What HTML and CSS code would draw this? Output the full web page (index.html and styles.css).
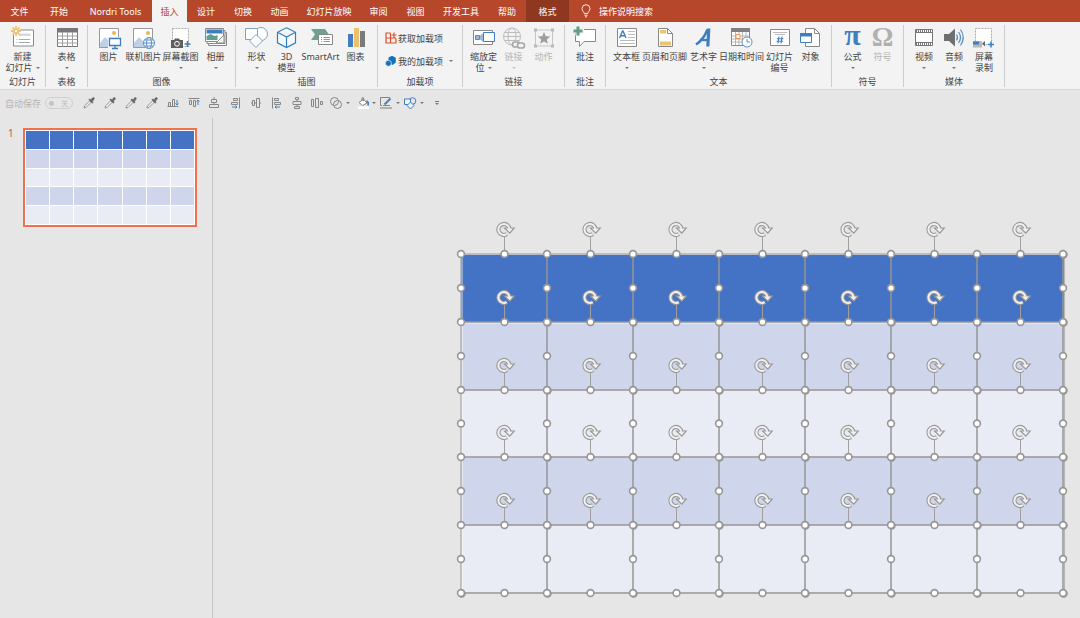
FILE: index.html
```html
<!DOCTYPE html>
<html lang="zh-CN">
<head>
<meta charset="utf-8">
<title>演示文稿</title>
<link rel="stylesheet" href="styles.css">
</head>
<body>
<div class="app">
<nav class="tabs">
  <button class="tab">文件</button>
  <button class="tab">开始</button>
  <button class="tab">Nordri Tools</button>
  <button class="tab active">插入</button>
  <button class="tab">设计</button>
  <button class="tab">切换</button>
  <button class="tab">动画</button>
  <button class="tab">幻灯片放映</button>
  <button class="tab">审阅</button>
  <button class="tab">视图</button>
  <button class="tab">开发工具</button>
  <button class="tab">帮助</button>
  <button class="tab context">格式</button>
  <button class="tab search"><svg width="10" height="14" viewBox="0 0 10 14" fill="none" stroke="#fbe9e4"><path d="M3.2 9.5C3.2 7.8 1 7 1 4.7a4 4 0 0 1 8 0C9 7 6.800 7.800 6.800 9.500zM3.300 11.200h3.400M4 12.800h2"/></svg><span>操作说明搜索</span></button>
</nav>

<section class="ribbon">
  <div class="group g-slide">
    <div class="tools">
      <button class="tool"><svg class="ico" viewBox="0 0 22 22"><path d="M1.500 3h20v16h-20z" fill="#fff" stroke="#8a8a8a"/><path d="M7 6.500h11.500v2.500H7z" fill="#d8d8d8"/><path d="M4.500 12.500h1M7 12.500h11M4.500 15.500h1M7 15.500h11" stroke="#aaa"/><circle cx="4" cy="4" r="4.500" fill="#f2f2f2"/><path d="M4-1v10M-1 4h10M.5.5l7 7M7.500.5l-7 7" stroke="#eab654" stroke-width="1.300"/><circle cx="4" cy="4" r="2" fill="#fff4dc" stroke="#eab654"/></svg><span>新建</span><span>幻灯片<i class="caret"></i></span></button>
    </div>
    <h2>幻灯片</h2>
  </div>
  <div class="group g-table">
    <div class="tools">
      <button class="tool w30"><svg class="ico" viewBox="0 0 22 22"><path d="M1.500 1.500h20v18h-20z" fill="#fff" stroke="#777"/><path d="M1 1h21v4.500H1z" fill="#777"/><path d="M1.500 9h20M1.500 12.500h20M1.500 16h20M6.500 5v14.500M11.500 5v14.500M16.500 5v14.500" stroke="#a0a0a0" fill="none"/></svg><span>表格</span><i class="caret"></i></button>
    </div>
    <h2>表格</h2>
  </div>
  <div class="group g-image">
    <div class="tools">
      <button class="tool w34"><svg class="ico" viewBox="0 0 22 22"><path d="M1.500 1.500h19v19h-19z" fill="#fff" stroke="#999"/><circle cx="16" cy="6" r="2" fill="#eab654"/><path d="M2 20v-4l5-6 5 5v5z" fill="#bdd0e6"/><path d="M10 10h13v12H10z" fill="#f2f2f2"/><path d="M11.500 11.500h11v7h-11zM17 18.500v2.500M14 21.500h6" fill="#fff" stroke="#3f7fc0" stroke-width="1.300"/></svg><span>图片</span></button>
      <button class="tool w36"><svg class="ico" viewBox="0 0 22 22"><path d="M.5 1.500h19v19H.5z" fill="#fff" stroke="#999"/><circle cx="15" cy="6" r="2" fill="#eab654"/><path d="M1 20v-4l5-6 5 5v5z" fill="#bdd0e6"/><g fill="#fff" stroke="#5b8fc6"><circle cx="16" cy="16" r="5.500"/><ellipse cx="16" cy="16" rx="2.500" ry="5.500"/><path d="M10.500 16h11M11.500 13h9M11.500 19h9"/></g></svg><span>联机图片</span></button>
      <button class="tool w38"><svg class="ico" viewBox="0 0 22 22"><path d="M2.500 1.500h16v18h-16z" fill="#fff" stroke="#aaa" stroke-dasharray="2 1"/><path d="M1 13h3l1-1.500h4l1 1.500h3v8H1z" fill="#5f5f5f"/><circle cx="7" cy="16.800" r="2.400" fill="none" stroke="#fff"/><path d="M14.500 17h6M17.500 14v6" stroke="#3f7fc0" stroke-width="1.600"/></svg><span>屏幕截图</span><i class="caret"></i></button>
      <button class="tool w32"><svg class="ico" viewBox="0 0 22 22"><g fill="#fff" stroke="#888"><path d="M3.500 5.500h18v13h-18z"/><path d="M2 3.500h18v13H2z"/><path d="M.5 1.500h18v13H.5z"/></g><path d="M1.500 2.500h16v4h-16z" fill="#3f7fc0"/><path d="M1.500 13V9l4-2 4 2 3-1v5z" fill="#5fa08c"/><path d="M19 8l-8 8h8z" fill="#f6f6f6" stroke="#888"/></svg><span>相册</span><i class="caret"></i></button>
    </div>
    <h2>图像</h2>
  </div>
  <div class="group g-illus">
    <div class="tools">
      <button class="tool w30"><svg class="ico" viewBox="0 0 22 22" fill="#fff" stroke="#7fa2c9"><circle cx="15" cy="7" r="6.500"/><path d="M-.5 1.500h12v11h-12z"/><path d="M10 7.500l6.500 6.500-6.500 6.500L3.500 14z"/></svg><span>形状</span><i class="caret"></i></button>
      <button class="tool w30"><svg class="ico" viewBox="0 0 22 22" fill="#f7fbff" stroke="#2f7ec4" stroke-width="1.200"><path d="M10.500 .8l9 4.500v10.500l-9 4.700-9-4.700V5.300zM1.500 5.300l9 4.700 9-4.700M10.500 10V20.500"/></svg><span>3D</span><span>模型</span></button>
      <button class="tool w38"><svg class="ico" viewBox="0 0 22 22"><path d="M1 2h14l4 5.500-4 5.500H1l4-5.500z" fill="#6aa490"/><path d="M8.500 7.500h14v10h-14z" fill="#fff" stroke="#888"/><path d="M11 10.500h1M13.500 10.500h6.500M11 12.500h1M13.500 12.500h6.500M11 14.500h1M13.500 14.500h6.500" stroke="#999"/></svg><span>SmartArt</span></button>
      <button class="tool w32"><svg class="ico" viewBox="0 0 22 22"><path d="M3 7h5v13H3z" fill="#3f7fc0"/><path d="M9 1h5v19H9z" fill="#edc06c"/><path d="M15 4h5v16h-5z" fill="#7a7a7a"/></svg><span>图表</span></button>
    </div>
    <h2>插图</h2>
  </div>
  <div class="group g-addin">
    <div class="rows">
      <button class="row"><svg width="12" height="12" viewBox="0 0 12 12" fill="none" stroke="#dc4f2c" stroke-width="1.200"><path d="M5.500 1H1v10h10V6.500M1 6h10M5.500 1v10M9 .5v5M6.600 3h4.900"/></svg><span>获取加载项</span></button>
      <button class="row"><svg width="12" height="12" viewBox="0 0 12 12"><path d="M3.500 2.500L7 .7l3.800 2v4.800L7.500 10 3.500 7.500z" fill="#1272bd"/><circle cx="3.400" cy="8.300" r="3" fill="#1272bd" stroke="#f2f2f2" stroke-width=".7"/></svg><span>我的加载项</span><i class="caret"></i></button>
    </div>
    <h2>加载项</h2>
  </div>
  <div class="group g-link">
    <div class="tools">
      <button class="tool w30"><svg class="ico" viewBox="0 0 22 22"><path d="M.5 3.500h19v14H.5z" fill="#fff" stroke="#888"/><path d="M2.500 8.500h4v4h-4z" fill="#9bb8d8" stroke="#5a8abf"/><path d="M7 8.500l4-3v10l-4-3z" fill="#9bb8d8"/><path d="M10.500 5.500h11v9h-11z" fill="#fff" stroke="#3f7fc0"/></svg><span>缩放定</span><span>位<i class="caret"></i></span></button>
      <button class="tool w30" disabled><svg class="ico" viewBox="0 0 22 22" fill="none" stroke="#bdbdbd"><g fill="#f7eff7"><circle cx="9" cy="9.500" r="8.500"/><ellipse cx="9" cy="9.500" rx="4" ry="8.500"/></g><path d="M.5 9.500h17M2 5.500h14M2 13.500h14"/><g stroke="#a8a8a8" stroke-width="1.700" fill="#f2f2f2"><rect x="9.500" y="15" width="7" height="5" rx="2.500"/><rect x="14.500" y="16" width="7" height="5" rx="2.500"/></g></svg><span>链接</span><i class="caret"></i></button>
      <button class="tool w30" disabled><svg class="ico" viewBox="0 0 22 22"><path d="M2.500 3h17v16h-17z" fill="none" stroke="#c6c6c6"/><path d="M1 1.500h3v3H1zM18 1.500h3v3h-3zM1 17.500h3v3H1zM18 17.500h3v3h-3z" fill="#b8b8b8"/><path d="M11 5l1.700 4.200 4.500.3-3.400 2.900 1.100 4.400-3.900-2.400-3.900 2.400 1.100-4.400-3.400-2.900 4.500-.3z" fill="#9d9d9d"/></svg><span>动作</span></button>
    </div>
    <h2>链接</h2>
  </div>
  <div class="group g-note">
    <div class="tools">
      <button class="tool w30"><svg class="ico" viewBox="0 0 22 22"><path d="M1.500 2.500h20v12H10l-4.500 5v-5h-4z" fill="#fff" stroke="#888"/><path d="M4-1v10M-1 4h11" stroke="#f2f2f2" stroke-width="5"/><path d="M4-.5v9M-.5 4h9" stroke="#5f9e88" stroke-width="3"/></svg><span>批注</span></button>
    </div>
    <h2>批注</h2>
  </div>
  <div class="group g-text">
    <div class="tools">
      <button class="tool w30"><svg class="ico" viewBox="0 0 22 22"><path d="M1.500 1.500h19v18h-19z" fill="#fff" stroke="#888"/><path d="M3.500 11L6.500 4h.5l3 7M4.800 8.800h4" fill="none" stroke="#3f7fc0" stroke-width="1.400"/><path d="M12 4.500h7M12 7.500h7M12 10.500h7M4 13.500h15M4 16.500h15" stroke="#bbb"/></svg><span>文本框</span><i class="caret"></i></button>
      <button class="tool w46"><svg class="ico" viewBox="0 0 22 22"><path d="M4.500 1.500h9l5 5v13h-14z" fill="#fff" stroke="#888"/><path d="M13.500 1.500v5h5" fill="none" stroke="#888"/><path d="M6 3h6v3.500H6zM6 14.500h11v4H6z" fill="#ecc275"/></svg><span>页眉和页脚</span></button>
      <button class="tool w32"><svg class="ico" viewBox="0 0 22 22" fill="none" stroke="#3f7fc0"><path d="M3 17.500C8.500 14 12 9 14.500 2.500" stroke-width="2.600"/><path d="M15.800 1.500l-1 18" stroke-width="3.200"/><path d="M7 12.500c3 1.500 5 0 8.500.5" stroke-width="2.200"/></svg><span>艺术字</span><i class="caret"></i></button>
      <button class="tool w44"><svg class="ico" viewBox="0 0 22 22"><path d="M.5 1.500h18v17H.5z" fill="#fff" stroke="#888"/><path d="M0 1h19v4H0z" fill="#808080"/><path d="M1 9h17M1 12h17M1 15h17M4.500 5v13M8 5v13M11.500 5v13M15 5v13" stroke="#b5b5b5"/><path d="M5 7.500h4v4H5z" fill="#fff" stroke="#e99357"/><circle cx="16" cy="15" r="5" fill="#fff" stroke="#6390c0"/><path d="M16 12v3h3" fill="none" stroke="#6390c0"/></svg><span>日期和时间</span></button>
      <button class="tool w32"><svg class="ico" viewBox="0 0 22 22" fill="none"><path d="M1.500 2.500h19v16h-19z" fill="#fff" stroke="#888"/><path d="M4 5.500h14M6 7.500h10" stroke="#bbb"/><path d="M10 9.500l-1 7M13 9.500l-1 7M8 11.700h6.500M7.500 14.300H14" stroke="#3f7fc0" stroke-width="1.100"/></svg><span>幻灯片</span><span>编号</span></button>
      <button class="tool w30"><svg class="ico" viewBox="0 0 22 22"><path d="M5.500 1.500h9l5 5v13h-14z" fill="#fff" stroke="#888"/><path d="M14.500 1.500v5h5" fill="none" stroke="#888"/><path d="M.5 6.500h11v9H.5z" fill="#fff" stroke="#3f7fc0"/><path d="M0 6h12v3.500H0z" fill="#3f7fc0"/></svg><span>对象</span></button>
    </div>
    <h2>文本</h2>
  </div>
  <div class="group g-symbol">
    <div class="tools">
      <button class="tool w30"><span class="glyph pi">π</span><span>公式</span><i class="caret"></i></button>
      <button class="tool w30" disabled><span class="glyph">Ω</span><span>符号</span></button>
    </div>
    <h2>符号</h2>
  </div>
  <div class="group g-media">
    <div class="tools">
      <button class="tool w30"><svg class="ico" viewBox="0 0 22 22"><path d="M2.500 2.500h17v16h-17z" fill="#fff" stroke="#777"/><path d="M3 4h16M3 17h16" stroke="#777" stroke-width="2" stroke-dasharray="1 1"/><path d="M3 5.500h16M3 15.500h16" stroke="#777"/></svg><span>视频</span><i class="caret"></i></button>
      <button class="tool w30"><svg class="ico" viewBox="0 0 22 22" fill="none"><path d="M1 7h5l6-5.500v18L6 14H1z" fill="#6f6f6f"/><path d="M13.500 7.500q2 3 0 6M15.500 5q4 5.500 0 11M17.500 2.500q5.500 8 0 16" stroke="#5a8cc0" stroke-width="1.200"/></svg><span>音频</span><i class="caret"></i></button>
      <button class="tool w30"><svg class="ico" viewBox="0 0 22 22"><path d="M2.500 1.500h16v16h-16z" fill="#fff" stroke="#aaa" stroke-dasharray="2 1"/><path d="M0 14h9v6.500H0z" fill="#b8b8b8"/><path d="M0 14.500h6v3H0z" fill="#3f7fc0"/><path d="M9 16.500l3-2.500v5.500z" fill="#666"/><path d="M15 17.500h6M18 14.500v6" stroke="#3f7fc0" stroke-width="1.600"/></svg><span>屏幕</span><span>录制</span></button>
    </div>
    <h2>媒体</h2>
  </div>
</section>

<div class="quick">
  <label class="autosave" for="autosave">自动保存</label>
  <span class="switch"><input type="checkbox" id="autosave" disabled><span>关</span></span>
  <div class="picks">
    <button aria-label="取色 1"><svg viewBox="0 0 12 12"><use href="#dropper"/></svg></button>
    <button aria-label="取色 2"><svg viewBox="0 0 12 12"><use href="#dropper"/></svg></button>
    <button aria-label="取色 3"><svg viewBox="0 0 12 12"><use href="#dropper"/></svg></button>
    <button aria-label="取色 4"><svg viewBox="0 0 12 12"><use href="#dropper"/></svg></button>
    <button aria-label="底端对齐"><svg viewBox="0 0 12 12"><path d="M.5 9.500h11M1.500 5.500h2v4h-2zM5.500 2.500h2v7h-2z"/><path class="b" d="M10 3v5M8.500 6.500L10 8l1.500-1.500"/></svg></button>
    <button aria-label="顶端对齐"><svg viewBox="0 0 12 12"><path d="M.5 1.500h11M1.500 3.500h2v4h-2zM5.500 3.500h2v6h-2z"/><path class="b" d="M10 8V3M8.500 4.500L10 3l1.500 1.500"/></svg></button>
    <button aria-label="水平居中"><svg viewBox="0 0 12 12"><path d="M6 0v2M3.500 2.500h5v3h-5zM6 5.500v2M1.500 7.500h9v3h-9z"/></svg></button>
    <button aria-label="右对齐"><svg viewBox="0 0 12 12"><path d="M10.500.5v11M4.500 1.500h4v2h-4zM2.500 5.500h6v2h-6z"/><path class="b" d="M3 10h5M6.500 8.500L8 10l-1.500 1.500"/></svg></button>
    <button aria-label="垂直居中"><svg viewBox="0 0 12 12"><path d="M2.500 3.500h2v5h-2zM6.500 1.500h3v9h-3zM1 6h1.500M4.500 6h2M9.500 6H11"/></svg></button>
    <button aria-label="左对齐"><svg viewBox="0 0 12 12"><path d="M1.500.5v11M3.500 1.500h4v2h-4zM3.500 5.500h6v2h-6z"/><path class="b" d="M9 10H4M5.500 8.500L4 10l1.500 1.500"/></svg></button>
    <button aria-label="纵向分布"><svg viewBox="0 0 12 12"><path d="M4.500.5h3v2h-3zM2 4.500h8v3H2zM3.500 9.500h5v2h-5zM6 2.500v2M6 7.500v2"/></svg></button>
    <button aria-label="横向分布"><svg viewBox="0 0 12 12"><path d="M.5 2.500h2v7h-2zM4.500 1.500h3v9h-3zM9.500 4.500h2v3h-2z"/></svg></button>
  </div>
  <div class="combos">
    <button aria-label="合并形状"><svg viewBox="0 0 12 12"><circle cx="4.500" cy="4.500" r="4"/><circle cx="7.500" cy="7.500" r="4"/></svg><i class="caret"></i></button>
    <button aria-label="形状填充"><svg viewBox="0 0 12 12"><path d="M1 9.500h11v2.500H1z" fill="#fff" stroke="none"/><path d="M2 5.500l4.500-3.500L10 6 5.500 8.500z" fill="#fff"/><path d="M5 4V.8h1.500V4"/><path d="M9.500 4q2.500 1 1.500 4.500" class="b" stroke-width="1.600"/></svg><i class="caret"></i></button>
    <button aria-label="形状轮廓"><svg viewBox="0 0 12 12"><path d="M10 .5H.5v8H2M3 8.500h7"/><path d="M0 11h12" stroke="#b0b0b0" stroke-width="2"/><path class="b" d="M10.500 1.500L4.500 7.500" stroke-width="1.800"/></svg><i class="caret"></i></button>
    <button aria-label="形状"><svg viewBox="0 0 12 12"><g class="b"><circle cx="8.500" cy="4" r="3.300"/><path d="M.5 2h6v5.500h-6z" fill="#eef3fa"/><path d="M6.500 5L10 8.500 6.500 12 3 8.500z" fill="#eef3fa"/></g></svg><i class="caret"></i></button>
    <button class="more" aria-label="自定义快速访问工具栏"><i class="caret"></i></button>
  </div>
</div>

<main class="work">
  <aside class="slides">
    <span class="num">1</span>
    <button class="thumb" aria-label="幻灯片 1"><span class="mini" id="mini"></span></button>
  </aside>
  <div class="canvas">
    <svg class="shape" id="shape" width="620" height="386" viewBox="0 0 620 386"></svg>
  </div>
</main>
</div>

<svg class="defs" width="0" height="0">
  <symbol id="dropper" viewBox="0 0 12 12"><path d="M1 11l.5-2L7 3.500 8.500 5 3 10.500z" fill="#f4f4f4" stroke="#888" stroke-width=".9"/><path d="M5.800 2.800l1-1L8 3 9.500.800q1.500-1 2 .8 0 .9-2 2.500L10.200 5.300l-1 1z" fill="#666" stroke="#666" stroke-width=".5"/></symbol>
  <symbol id="turn" overflow="visible">
    <path d="M2.900 4.600A5.500 5.500 0 1 1 5.400-.6" fill="none" stroke="#999" stroke-width="4.200"/>
    <path d="M.5-1.500H10.200L5.800 3.700z" fill="#efefef" stroke="#999" stroke-width="1.200"/>
    <path d="M2.700 4.700A5.500 5.500 0 1 1 5.400-.6" fill="none" stroke="#f1f1f1" stroke-width="2"/>
    <path d="M3-.6H8L5.800 2.100z" fill="#f1f1f1"/>
  </symbol>
</svg>
<script src="canvas.js"></script>
</body>
</html>
```
FILE: styles.css
```css
* { box-sizing: border-box; }
body {
  margin: 0;
  background: #e6e6e6;
  color: #444;
  font-family: "Noto Sans", "Noto Sans CJK SC", sans-serif;
  font-size: 9px;
  line-height: 11px;
}
button {
  border: 0;
  margin: 0;
  padding: 0;
  background: none;
  color: inherit;
  font: inherit;
  white-space: nowrap;
}
svg { overflow: visible; flex: none; }
.defs { position: absolute; }
.app { display: flex; flex-direction: column; min-height: 100vh; }

.tabs {
  display: grid;
  grid-template-columns: 39px 40px 73px 35px 38px 36px 37px 62px 37px 37px 54px 38px 43px 1fr;
  height: 22px;
  background: #b7472a;
  color: #fff;
}
.tab.active { background: #f3f3f3; color: #b7472a; }
.tab.context { background: #8f3820; }
.tab.search { display: flex; align-items: center; gap: 8px; padding-left: 12px; }

.ribbon {
  display: flex;
  height: 68px;
  padding-top: 3px;
  background: #f3f3f3;
  border-bottom: 1px solid #d6d6d6;
}
.group {
  display: flex;
  flex-direction: column;
  height: 62px;
  border-right: 1px solid #cdcdcd;
}
.g-slide { width: 46px; }
.g-table { width: 42px; }
.g-image { width: 148px; }
.g-illus { width: 142px; }
.g-addin { width: 85px; }
.g-link { width: 102px; }
.g-note { width: 41px; }
.g-text { width: 226px; }
.g-symbol { width: 72px; }
.g-media { width: 101px; }
.group h2 { margin: 0; font: inherit; text-align: center; }
.tools { display: flex; justify-content: center; height: 52px; padding-top: 2px; }
.tool { display: flex; flex-direction: column; align-items: center; }
.tool:disabled { color: #b5b5b5; }
.ico { width: 22px; height: 22px; margin-bottom: 2px; }
.tool > .caret { margin: 5px 0 0 0; }
.w30 { width: 30px; }
.w32 { width: 32px; }
.w34 { width: 34px; }
.w36 { width: 36px; }
.w38 { width: 38px; }
.w44 { width: 44px; }
.w46 { width: 46px; }
.g-slide .tool { width: 42px; }
.caret {
  display: inline-block;
  width: 0;
  height: 0;
  border: 2px solid transparent;
  border-top-color: #777;
  border-bottom: 0;
}
:disabled .caret { border-top-color: #c4c4c4; }
.tool span .caret { margin: 0 0 2px 3px; }
.glyph {
  height: 24px;
  color: #3f7fc0;
  font: bold 27px/20px "Liberation Serif", serif;
}
.glyph.pi { font-size: 30px; line-height: 16px; }
.tool:disabled .glyph { color: #b0b0b0; }
.rows { display: flex; flex-direction: column; height: 52px; padding: 7px 0 0 7px; gap: 11px; }
.row { display: flex; align-items: center; gap: 1px; height: 12px; }
.row .caret { margin-left: 5px; }

.quick { display: flex; align-items: center; height: 28px; padding: 0 0 2px 5px; }
.autosave { width: 40px; color: #b4b4b4; }
.switch {
  display: flex;
  align-items: center;
  justify-content: space-between;
  width: 28px;
  height: 12px;
  padding: 0 4px 0 3px;
  border: 1px solid #cfcfcf;
  border-radius: 6px;
  color: #c0c0c0;
  font-size: 7px;
}
.switch input {
  appearance: none;
  width: 5px;
  height: 5px;
  margin: 0;
  border-radius: 50%;
  background: #c4c4c4;
}
.picks {
  display: grid;
  grid-template-columns: repeat(6, 21px) 20px repeat(3, 21px) 20px 20px;
  margin-left: 5px;
}
.quick button { display: flex; align-items: center; justify-content: center; }
.quick svg { width: 12px; height: 12px; fill: none; stroke: #868686; }
.quick .b { stroke: #3f7fc0; }
.combos { display: grid; grid-template-columns: 27px 23px 24px 25px 12px; margin-left: 1px; }
.combos button { gap: 4px; justify-content: flex-start; padding-left: 2px; }
.combos button:nth-child(2) { gap: 3px; }
.combos .more { flex-direction: column; gap: 1px; align-items: flex-end; justify-content: center; }
.more::before { content: ""; width: 4px; height: 1px; background: #777; }

.work { display: flex; flex: 1; }
.slides {
  display: flex;
  align-items: flex-start;
  width: 213px;
  padding-top: 10px;
  border-right: 1px solid #c6c6c6;
}
.num { width: 23px; padding-left: 8px; color: #d2533a; font-size: 10px; }
.thumb { width: 174px; height: 99px; padding: 1px; border: 2px solid #f0714f; background: #fff; }
.mini {
  display: grid;
  grid-template-columns: repeat(7, 1fr);
  grid-template-rows: repeat(5, 1fr);
  gap: 1px;
  height: 100%;
}
.mini i { background: #e9ebf5; }
.mini .band { background: #cfd5ea; }
.mini .head { background: #4472c4; }
.canvas { position: relative; flex: 1; overflow: hidden; }
.shape { position: absolute; left: 239px; top: 101px; }
```
FILE: canvas.js
```js
const mini = document.getElementById('mini');
const kinds = ['head', 'band', '', 'band', ''];
kinds.forEach(kind => {
  for (let c = 0; c < 7; c++) {
    const cell = document.createElement('i');
    if (kind) cell.className = kind;
    mini.appendChild(cell);
  }
});

// Grid lines of the slide table, in the drawing's own coordinates.
const xs = [9, 95, 181, 267, 353, 439, 525, 611];
const ys = [35, 103, 171, 238, 306, 374];
const fills = ['#4472c4', '#cfd5ea', '#e9ebf5', '#cfd5ea', '#e9ebf5'];
let out = '';
for (let r = 0; r < 5; r++) {
  out += `<rect x="9" y="${ys[r]}" width="603" height="${ys[r + 1] - ys[r]}" fill="${fills[r]}"/>`;
}
out += '<path d="M10 35.500H611M10 104H611M10 35V373" stroke="#fff" stroke-opacity=".8" fill="none"/>';
ys.forEach((y, i) => {
  out += `<path d="M9 ${y}H612" stroke="#969696" stroke-width="${i ? 1.5 : 1}"/>`;
});
xs.forEach((x, i) => {
  out += `<path d="M${x} 35V374" stroke="#969696" stroke-width="${i ? 1.5 : 1}"/>`;
});
out += '<path d="M612.500 35V375" stroke="#b5b5b5"/>';

const dot = (x, y) => `<circle cx="${x}" cy="${y}" r="3.400" fill="#fff" stroke="#969696" stroke-width="1.600"/>`;
for (let r = 0; r < 5; r++) {
  for (let c = 0; c < 7; c++) {
    const mx = xs[c] + 43;
    out += `<path d="M${mx + 0.5} ${ys[r] - 17}V${ys[r]}" stroke="#a0a0a0"/>`;
    out += `<use href="#turn" x="${mx}" y="${ys[r] - 24.5}"/>`;
  }
}
ys.forEach((y, r) => {
  xs.forEach((x, c) => {
    if (c > 0 && r > 0 || c === 7 || r === 5) out += dot(x + 0.6, y + 0.6);
    out += dot(x, y);
    if (c < 7) out += dot(x + 43.5, y);
    if (r < 5) out += dot(x, (y + ys[r + 1]) / 2);
  });
});
document.getElementById('shape').innerHTML = out;
```
